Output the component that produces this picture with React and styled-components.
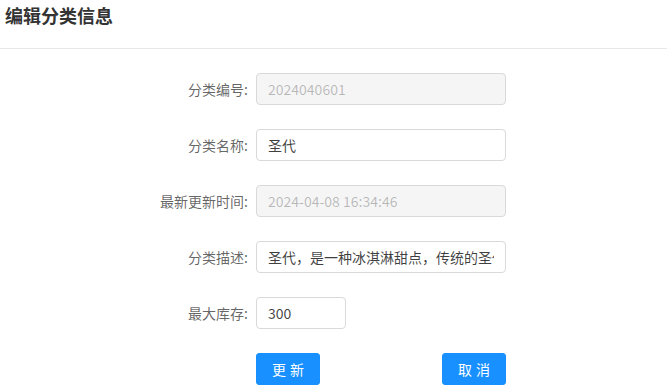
import React from 'react';
import styled, { createGlobalStyle } from 'styled-components';

const GlobalStyle = createGlobalStyle`
  body {
    margin: 0;
    background: #fff;
    font-family: "Noto Sans CJK SC", "Noto Sans", sans-serif;
    color: rgba(0, 0, 0, 0.65);
  }
`

const Page = styled.div`
  width: 667px;
  height: 388px;
  overflow: hidden;
  background: #fff;
`

const Header = styled.div`
  height: 49px;
  padding: 0 5px;
  border-bottom: 1px solid #e8e8e8;
  box-sizing: border-box;
`

const Title = styled.h2`
  margin: 0;
  font-size: 18px;
  line-height: 30px;
  font-weight: 700;
  color: #333;
`

const Form = styled.form`
  display: grid;
  grid-template-columns: 248px 250px;
  column-gap: 8px;
  row-gap: 24px;
  align-items: center;
  margin-top: 24px;
`

const Label = styled.label`
  text-align: right;
  font-size: 14px;
  line-height: 32px;
  color: rgba(0, 0, 0, 0.62);
  white-space: nowrap;
`

const Field = styled.div`
  display: flex;
  height: 32px;
`

const Input = styled.input`
  width: ${p => p.$w || 250}px;
  height: 32px;
  box-sizing: border-box;
  padding: 4px 11px;
  font-family: inherit;
  font-size: 14px;
  color: ${p => (p.disabled ? 'rgba(0, 0, 0, 0.25)' : 'rgba(0, 0, 0, 0.75)')};
  background: ${p => (p.disabled ? '#f5f5f5' : '#fff')};
  border: 1px solid #d9d9d9;
  border-radius: 4px;
  outline: none;
`

const Actions = styled.div`
  grid-column: 2;
  display: flex;
  justify-content: space-between;
`

const Button = styled.button`
  width: 64px;
  height: 32px;
  padding: 0;
  font-family: inherit;
  font-size: 14px;
  letter-spacing: 4px;
  text-indent: 4px;
  color: #fff;
  background: #1890ff;
  border: 1px solid #1890ff;
  border-radius: 3px;
  cursor: pointer;
`

const fields = [
  { label: '分类编号:', value: '2024040601', disabled: true },
  { label: '分类名称:', value: '圣代' },
  { label: '最新更新时间:', value: '2024-04-08 16:34:46', disabled: true },
  { label: '分类描述:', value: '圣代，是一种冰淇淋甜点，传统的圣代是由冰淇淋加上糖浆和水果组成' },
  { label: '最大库存:', value: '300', width: 90 },
];

export default function App() {
  return (
    <Page>
      <GlobalStyle />
      <Header>
        <Title>编辑分类信息</Title>
      </Header>
      <Form onSubmit={e => e.preventDefault()}>
        {fields.map(f => (
          <React.Fragment key={f.label}>
            <Label>{f.label}</Label>
            <Field>
              <Input
                value={f.value}
                disabled={f.disabled}
                readOnly
                $w={f.width}
              />
            </Field>
          </React.Fragment>
        ))}
        <Actions>
          <Button type="submit">更新</Button>
          <Button type="button">取消</Button>
        </Actions>
      </Form>
    </Page>
  );
}
